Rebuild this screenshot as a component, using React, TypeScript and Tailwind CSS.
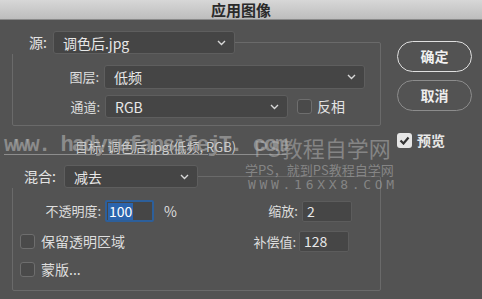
import React from "react";

const font = { fontFamily: '"Noto Sans CJK SC", "Noto Sans", sans-serif' };

function Chevron() {
  return (
    <svg width="9" height="6" viewBox="0 0 9 6" className="shrink-0">
      <path d="M1 1l3.5 3.5L8 1" fill="none" stroke="#d8d8d8" strokeWidth="1.4" />
    </svg>
  );
}

function Select({ value, className }: { value: string; className: string }) {
  return (
    <div
      className={`flex items-center justify-between rounded-[3px] border border-[#5e5e5e] bg-[#454545] pl-[9px] pr-[8px] text-[14px] text-[#e8e8e8] ${className}`}
    >
      <span className="leading-none">{value}</span>
      <Chevron />
    </div>
  );
}

function Box({ checked = false }: { checked?: boolean }) {
  if (checked) {
    return (
      <div className="flex h-[15px] w-[15px] items-center justify-center rounded-[3px] bg-[#e6e6e6]">
        <svg width="11" height="9" viewBox="0 0 11 9">
          <path d="M1.5 4.5l3 3L9.5 1.5" fill="none" stroke="#333" strokeWidth="2.2" />
        </svg>
      </div>
    );
  }
  return <div className="h-[15px] w-[15px] rounded-[3px] border border-[#6e6e6e] bg-[#4a4a4a]" />;
}

function NumInput({ value }: { value: string }) {
  return (
    <div className="flex h-[21px] w-[50px] items-center rounded-[2px] border border-[#5c5c5c] bg-[#464646] pl-[4px] text-[14px] text-[#e8e8e8]">
      {value}
    </div>
  );
}

export default function App() {
  return (
    <div className="relative h-[299px] w-[482px] overflow-hidden bg-[#535353] text-[13px] text-[#dedede]" style={font}>
      {/* title bar */}
      <div className="flex h-[20px] items-center justify-center border-b border-[#8a8a8a] bg-gradient-to-b from-[#d7d7d7] to-[#bdbdbd] text-[15px] leading-[20px] font-bold text-[#2a2a2a]">
        应用图像
      </div>

      <div className="flex pl-[12px]">
        {/* left column */}
        <div className="w-[369px]">
          {/* source */}
          <div className="relative z-10 mt-[11px] flex h-[23px] items-center">
            <div className="flex h-full items-center bg-[#535353] pl-[17px] pr-[6px] text-[14px] text-[#e4e4e4]">源:</div>
            <Select value="调色后.jpg" className="h-[23px] w-[182px]" />
          </div>
          <div className="-mt-[12px] h-[84px] rounded-[2px] border border-[#6a6a6a] pt-[22px]">
            <div className="flex h-[24px] items-center">
              <div className="w-[91px] pr-[5px] text-right">图层:</div>
              <Select value="低频" className="h-[24px] w-[261px]" />
            </div>
            <div className="mt-[6px] flex h-[23px] items-center">
              <div className="w-[92px] pr-[5px] text-right">通道:</div>
              <Select value="RGB" className="h-[23px] w-[183px]" />
              <div className="ml-[9px]"><Box /></div>
              <span className="ml-[5px] text-[14px] text-[#e4e4e4]">反相</span>
            </div>
          </div>

          {/* target */}
          <div className="mt-[13px] h-[16px] pl-[63px] text-[13px] leading-[16px] text-[#cfcfcf]">
            目标: 调色后.jpg(低频, RGB)
          </div>

          {/* blending */}
          <div className="relative z-10 mt-[10px] flex h-[23px] items-center">
            <div className="flex h-full items-center bg-[#535353] pl-[12px] pr-[8px] text-[14px] text-[#e4e4e4]">混合:</div>
            <Select value="减去" className="h-[23px] w-[134px]" />
          </div>
          <div className="-mt-[12px] h-[115px] rounded-[2px] border border-[#6a6a6a] pt-[23px]">
            <div className="flex h-[22px] items-center">
              <div className="w-[92px] pr-[4px] text-right">不透明度:</div>
              <div className="flex h-[22px] w-[49px] items-center rounded-[2px] border-2 border-[#2d5f9a] bg-[#464646] pl-[1px] text-[14px]">
                <span className="bg-[#2b64ad] px-px leading-[17px] text-white">100</span>
              </div>
              <span className="ml-[10px] text-[14px]">%</span>
              <div className="ml-[74px] w-[51px] pr-[4px] text-right">缩放:</div>
              <NumInput value="2" />
            </div>
            <div className="mt-[9px] flex h-[21px] items-center">
              <div className="ml-[7px]"><Box /></div>
              <span className="ml-[6px] text-[14px]">保留透明区域</span>
              <div className="ml-[124px] w-[50px] pr-[3px] text-right">补偿值:</div>
              <NumInput value="128" />
            </div>
            <div className="mt-[9px] flex h-[16px] items-center">
              <div className="ml-[7px]"><Box /></div>
              <span className="ml-[6px] text-[14px]">蒙版...</span>
            </div>
          </div>
        </div>

        {/* right column */}
        <div className="ml-[16px] mt-[21px] flex w-[75px] flex-col">
          <button className="h-[31px] rounded-full border-[1.5px] border-[#e0e0e0] text-[14px] font-bold text-[#f0f0f0]">确定</button>
          <button className="mt-[8px] h-[31px] rounded-full border-[1.5px] border-[#8c8c8c] text-[14px] font-bold text-[#ededed]">取消</button>
          <div className="mt-[19px] flex items-center">
            <Box checked />
            <span className="ml-[5px] text-[14px] font-bold text-[#e8e8e8]">预览</span>
          </div>
        </div>
      </div>

      {/* watermark */}
      <div
        className="pointer-events-none absolute left-[4px] top-[134px] text-[22px] font-bold leading-[24px] tracking-[-1.9px] text-[#bdbdbd]/55 underline decoration-1 underline-offset-[3px]"
        style={{ fontFamily: '"Liberation Mono", "DejaVu Sans Mono", monospace' }}
      >
        www. hadyrufansifejT. com
      </div>
      <div
        className="pointer-events-none absolute left-[254px] top-[133px] text-[22px] leading-[28px] text-[#b8b8b8]/50"
        style={{ fontFamily: '"Noto Sans CJK SC", serif' }}
      >
        PS教程自学网
      </div>
      <div className="pointer-events-none absolute left-[245px] top-[161px] text-[13px] leading-[18px] text-[#b8b8b8]/50">
        学PS，就到PS教程自学网
      </div>
      <div
        className="pointer-events-none absolute left-[248px] top-[177px] text-[13px] leading-[16px] tracking-[3.7px] text-[#b8b8b8]/50"
        style={{ fontFamily: '"DejaVu Sans Mono", monospace' }}
      >
        WWW.16XX8.COM
      </div>
    </div>
  );
}
